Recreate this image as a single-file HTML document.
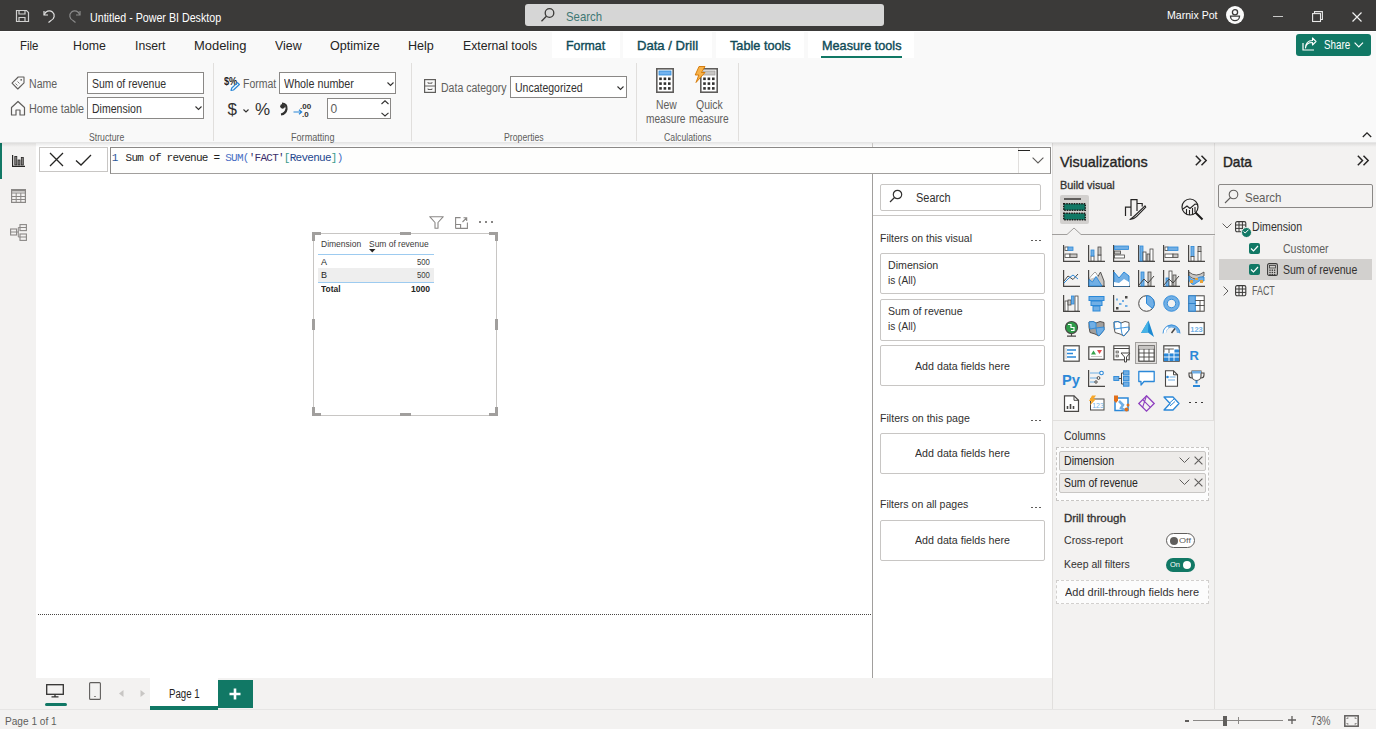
<!DOCTYPE html><html><head><meta charset="utf-8"><style>
*{margin:0;padding:0;box-sizing:border-box}
html,body{width:1376px;height:729px;overflow:hidden;background:#fff;font-family:"Liberation Sans",sans-serif}
.a{position:absolute}
.t{position:absolute;white-space:nowrap}
svg{overflow:visible}
</style></head><body>
<div class="a" style="left:0px;top:0px;width:1376px;height:31px;background:#3b3a39"></div>
<div class="a" style="left:0px;top:31px;width:1376px;height:112px;background:#f9f9f9"></div>
<div class="a" style="left:0px;top:31px;width:1376px;height:1px;background:#ffffff"></div>
<div class="a" style="left:0px;top:142px;width:1376px;height:1px;background:#e6e6e6"></div>
<div class="a" style="left:0px;top:143px;width:36px;height:567px;background:#f3f2f1"></div>
<div class="a" style="left:0px;top:143px;width:2px;height:36px;background:#117865"></div>
<div class="a" style="left:36px;top:143px;width:1016px;height:535px;background:#ffffff"></div>
<div class="a" style="left:36px;top:678px;width:1016px;height:32px;background:#f3f2f1"></div>
<div class="a" style="left:1052px;top:143px;width:324px;height:567px;background:#f3f2f1"></div>
<div class="a" style="left:1052px;top:143px;width:1px;height:567px;background:#e1dfdd"></div>
<div class="a" style="left:1214px;top:143px;width:1px;height:567px;background:#e1dfdd"></div>
<div class="a" style="left:0px;top:710px;width:1376px;height:19px;background:#f3f2f1"></div>
<div class="a" style="left:0px;top:709px;width:1376px;height:1px;background:#e6e5e4"></div>
<svg class="a" style="left:15px;top:9px" width="15" height="14" viewBox="0 0 15 14"><path d="M1.5 1.5h10l2 2v9h-12z" fill="none" stroke="#d0d0d0" stroke-width="1.2"/><path d="M4 1.5v3.5h6v-3.5M4 12.5v-4h6v4" fill="none" stroke="#d0d0d0" stroke-width="1.2"/></svg>
<svg class="a" style="left:42px;top:9px" width="14" height="14" viewBox="0 0 14 14"><path d="M2 2v4h4" fill="none" stroke="#e0e0e0" stroke-width="1.2"/><path d="M2.3 5.8A5 5 0 1 1 9 11.5L6.5 13.5" fill="none" stroke="#e0e0e0" stroke-width="1.2"/></svg>
<svg class="a" style="left:68px;top:9px" width="14" height="14" viewBox="0 0 14 14"><path d="M12 2v4h-4" fill="none" stroke="#8a8a8a" stroke-width="1.2"/><path d="M11.7 5.8A5 5 0 1 0 5 11.5L7.5 13.5" fill="none" stroke="#8a8a8a" stroke-width="1.2"/></svg>
<div class="t" style="left:90.40px;top:12.24px;font-size:12px;line-height:12px;color:#ffffff;font-family:'Liberation Sans',sans-serif;transform:scaleX(0.8893);transform-origin:0 0;">Untitled - Power BI Desktop</div>
<div class="a" style="left:525px;top:4px;width:359px;height:22px;background:#d6d6d6;border-radius:3px"></div>
<svg class="a" style="left:540px;top:7px" width="16" height="16" viewBox="0 0 16 16"><circle cx="9.5" cy="6" r="4.3" fill="none" stroke="#3b3a39" stroke-width="1.3"/><path d="M6.4 9.2L1.5 14.2" stroke="#3b3a39" stroke-width="1.3"/></svg>
<div class="t" style="left:566.00px;top:9.59px;font-size:13px;line-height:13px;color:#3e7874;font-family:'Liberation Sans',sans-serif;transform:scaleX(0.8736);transform-origin:0 0;">Search</div>
<div class="t" style="left:1166.80px;top:10.26px;font-size:11.5px;line-height:11.5px;color:#ffffff;font-family:'Liberation Sans',sans-serif;transform:scaleX(0.9187);transform-origin:0 0;">Marnix Pot</div>
<svg class="a" style="left:1226px;top:6px" width="18" height="18" viewBox="0 0 18 18"><circle cx="9" cy="9" r="9" fill="#fafafa"/><circle cx="9" cy="6.2" r="2.6" fill="none" stroke="#3b3a39" stroke-width="1.3"/><path d="M4.5 10.2h9a4.5 4.5 0 0 1-9 0z" fill="none" stroke="#3b3a39" stroke-width="1.3"/></svg>
<div class="a" style="left:1273px;top:16px;width:10px;height:1px;background:#c8c8c8"></div>
<svg class="a" style="left:1312px;top:11px" width="11" height="11" viewBox="0 0 11 11"><path d="M2.5 2.5V0.6h7.9v7.9H8.5" fill="none" stroke="#e8e8e8" stroke-width="1.1"/><rect x="0.6" y="2.6" width="7.9" height="7.9" fill="none" stroke="#e8e8e8" stroke-width="1.1"/></svg>
<svg class="a" style="left:1352px;top:12px" width="10" height="10" viewBox="0 0 10 10"><path d="M0.5 0.5L9.5 9.5M9.5 0.5L0.5 9.5" stroke="#f0f0f0" stroke-width="1.2"/></svg>
<div class="t" style="left:20.30px;top:39.29px;font-size:13px;line-height:13px;color:#252423;font-family:'Liberation Sans',sans-serif;transform:scaleX(0.8791);transform-origin:0 0;">File</div>
<div class="t" style="left:73.30px;top:39.29px;font-size:13px;line-height:13px;color:#252423;font-family:'Liberation Sans',sans-serif;transform:scaleX(0.9479);transform-origin:0 0;">Home</div>
<div class="t" style="left:134.90px;top:39.29px;font-size:13px;line-height:13px;color:#252423;font-family:'Liberation Sans',sans-serif;transform:scaleX(0.9385);transform-origin:0 0;">Insert</div>
<div class="t" style="left:194.30px;top:39.29px;font-size:13px;line-height:13px;color:#252423;font-family:'Liberation Sans',sans-serif;transform:scaleX(0.9947);transform-origin:0 0;">Modeling</div>
<div class="t" style="left:275.30px;top:39.29px;font-size:13px;line-height:13px;color:#252423;font-family:'Liberation Sans',sans-serif;transform:scaleX(0.9517);transform-origin:0 0;">View</div>
<div class="t" style="left:330.20px;top:39.29px;font-size:13px;line-height:13px;color:#252423;font-family:'Liberation Sans',sans-serif;transform:scaleX(0.9691);transform-origin:0 0;">Optimize</div>
<div class="t" style="left:408.20px;top:39.29px;font-size:13px;line-height:13px;color:#252423;font-family:'Liberation Sans',sans-serif;transform:scaleX(0.9657);transform-origin:0 0;">Help</div>
<div class="t" style="left:463.20px;top:39.29px;font-size:13px;line-height:13px;color:#252423;font-family:'Liberation Sans',sans-serif;transform:scaleX(0.9406);transform-origin:0 0;">External tools</div>
<div class="a" style="left:552px;top:32px;width:68px;height:26px;background:#ffffff"></div>
<div class="a" style="left:623px;top:32px;width:89px;height:26px;background:#ffffff"></div>
<div class="a" style="left:716px;top:32px;width:88px;height:26px;background:#ffffff"></div>
<div class="a" style="left:808px;top:32px;width:106px;height:26px;background:#ffffff"></div>
<div class="t" style="left:566.40px;top:38.89px;font-size:13px;line-height:13px;color:#0f4b57;font-family:'Liberation Sans',sans-serif;transform:scaleX(0.9503);transform-origin:0 0;-webkit-text-stroke:0.4px #0f4b57">Format</div>
<div class="t" style="left:637.40px;top:38.89px;font-size:13px;line-height:13px;color:#0f4b57;font-family:'Liberation Sans',sans-serif;transform:scaleX(1.0064);transform-origin:0 0;-webkit-text-stroke:0.4px #0f4b57">Data / Drill</div>
<div class="t" style="left:729.60px;top:38.89px;font-size:13px;line-height:13px;color:#0f4b57;font-family:'Liberation Sans',sans-serif;transform:scaleX(0.9768);transform-origin:0 0;-webkit-text-stroke:0.4px #0f4b57">Table tools</div>
<div class="t" style="left:821.50px;top:38.89px;font-size:13px;line-height:13px;color:#0f4b57;font-family:'Liberation Sans',sans-serif;transform:scaleX(0.9738);transform-origin:0 0;-webkit-text-stroke:0.4px #0f4b57">Measure tools</div>
<div class="a" style="left:821px;top:56px;width:81px;height:2px;background:#117865"></div>
<div class="a" style="left:1296px;top:34px;width:75px;height:22px;background:#117865;border-radius:3px"></div>
<svg class="a" style="left:1302px;top:38px" width="15" height="13" viewBox="0 0 15 13"><path d="M1 5v7h11" fill="none" stroke="#fff" stroke-width="1.2"/><path d="M3.5 10c0.5-4 3-5.5 7-5.5V7l3.5-3.5L10.5 0v2.5C6 2.5 3.5 5.5 3.5 10z" fill="none" stroke="#fff" stroke-width="1.1" stroke-linejoin="round"/></svg>
<div class="t" style="left:1323.80px;top:39.34px;font-size:12px;line-height:12px;color:#ffffff;font-family:'Liberation Sans',sans-serif;transform:scaleX(0.8177);transform-origin:0 0;">Share</div>
<svg class="a" style="left:1354px;top:42px" width="10" height="6" viewBox="0 0 10 6"><path d="M0.6 0.6L4.8 4.8L9 0.6" fill="none" stroke="#fff" stroke-width="1.2"/></svg>
<div class="a" style="left:0px;top:143px;width:1376px;height:4px;background:linear-gradient(rgba(0,0,0,0.09),rgba(0,0,0,0))"></div>
<div class="a" style="left:213px;top:63px;width:1px;height:78px;background:#e1dfdd"></div>
<div class="a" style="left:411px;top:63px;width:1px;height:78px;background:#e1dfdd"></div>
<div class="a" style="left:636px;top:63px;width:1px;height:78px;background:#e1dfdd"></div>
<div class="a" style="left:738px;top:63px;width:1px;height:78px;background:#e1dfdd"></div>
<svg class="a" style="left:11px;top:76px" width="14" height="14" viewBox="0 0 14 14"><path d="M1 7.2L7.2 1h5.8v5.8L6.8 13z" fill="none" stroke="#605e5c" stroke-width="1.1" stroke-linejoin="round"/><circle cx="10.2" cy="3.8" r="0.9" fill="#605e5c"/><path d="M4.5 7.5l2 2M6.5 5.5l2 2" stroke="#605e5c" stroke-width="0.8"/></svg>
<div class="t" style="left:28.80px;top:78.44px;font-size:12px;line-height:12px;color:#605e5c;font-family:'Liberation Sans',sans-serif;transform:scaleX(0.8801);transform-origin:0 0;">Name</div>
<div class="a" style="left:87px;top:72px;width:117px;height:22px;background:#fff;border:1px solid #8a8886"></div>
<div class="t" style="left:92.20px;top:78.44px;font-size:12px;line-height:12px;color:#323130;font-family:'Liberation Sans',sans-serif;transform:scaleX(0.8746);transform-origin:0 0;">Sum of revenue</div>
<svg class="a" style="left:10px;top:100px" width="16" height="16" viewBox="0 0 16 16"><path d="M1.5 7.5L8 1.5l6.5 6V15h-4.5v-5h-4v5H1.5z" fill="none" stroke="#605e5c" stroke-width="1.2" stroke-linejoin="round"/></svg>
<div class="t" style="left:28.80px;top:103.24px;font-size:12px;line-height:12px;color:#605e5c;font-family:'Liberation Sans',sans-serif;transform:scaleX(0.8977);transform-origin:0 0;">Home table</div>
<div class="a" style="left:87px;top:97px;width:117px;height:22px;background:#fff;border:1px solid #8a8886"></div>
<div class="t" style="left:92.20px;top:103.24px;font-size:12px;line-height:12px;color:#323130;font-family:'Liberation Sans',sans-serif;transform:scaleX(0.8783);transform-origin:0 0;">Dimension</div>
<svg class="a" style="left:195px;top:106px" width="7" height="4" viewBox="0 0 7 4"><path d="M0.5 0.5L3.5 3.5L6.5 0.5" fill="none" stroke="#323130" stroke-width="1.1"/></svg>
<div class="t" style="left:89.00px;top:132.83px;font-size:10px;line-height:10px;color:#605e5c;font-family:'Liberation Sans',sans-serif;transform:scaleX(0.8681);transform-origin:0 0;">Structure</div>
<div class="t" style="left:223.70px;top:76.63px;font-size:10px;line-height:10px;color:#252423;font-family:'Liberation Sans',sans-serif;font-weight:700;transform:scaleX(0.9204);transform-origin:0 0;">$%</div>
<svg class="a" style="left:229.5px;top:81.5px" width="10" height="9" viewBox="0 0 10 9"><path d="M1 8.5l0.8-2.5L7.5 0.6l1.9 1.9L3.5 8z" fill="none" stroke="#2b88d8" stroke-width="1.2" stroke-linejoin="round"/></svg>
<div class="t" style="left:242.80px;top:77.64px;font-size:12px;line-height:12px;color:#605e5c;font-family:'Liberation Sans',sans-serif;transform:scaleX(0.8741);transform-origin:0 0;">Format</div>
<div class="a" style="left:279px;top:72px;width:117px;height:22px;background:#fff;border:1px solid #8a8886"></div>
<div class="t" style="left:284.30px;top:77.64px;font-size:12px;line-height:12px;color:#323130;font-family:'Liberation Sans',sans-serif;transform:scaleX(0.8955);transform-origin:0 0;">Whole number</div>
<svg class="a" style="left:387px;top:82px" width="7" height="4" viewBox="0 0 7 4"><path d="M0.5 0.5L3.5 3.5L6.5 0.5" fill="none" stroke="#323130" stroke-width="1.1"/></svg>
<div class="t" style="left:227.50px;top:100.91px;font-size:17px;line-height:17px;color:#323130;font-family:'Liberation Sans',sans-serif;">$</div>
<svg class="a" style="left:243px;top:109px" width="6" height="4" viewBox="0 0 6 4"><path d="M0.5 0.5L3 3L5.5 0.5" fill="none" stroke="#323130" stroke-width="1.1"/></svg>
<div class="t" style="left:255.00px;top:100.91px;font-size:17px;line-height:17px;color:#323130;font-family:'Liberation Sans',sans-serif;">%</div>
<svg class="a" style="left:279px;top:102px" width="9" height="13" viewBox="0 0 9 13"><path d="M3 1.5c3 0 5 2 4.5 5.5C7 10 5 12 2 12.5" fill="none" stroke="#323130" stroke-width="2.2"/><circle cx="3.6" cy="4.3" r="2.4" fill="#323130"/></svg>
<div class="t" style="left:300.00px;top:102.83px;font-size:8px;line-height:8px;color:#323130;font-family:'Liberation Sans',sans-serif;font-weight:700;">.00</div>
<div class="t" style="left:302.00px;top:110.83px;font-size:8px;line-height:8px;color:#323130;font-family:'Liberation Sans',sans-serif;font-weight:700;">.0</div>
<svg class="a" style="left:293px;top:109px" width="10" height="6" viewBox="0 0 10 6"><path d="M0.5 3h8M6 0.7L8.7 3L6 5.3" fill="none" stroke="#2b88d8" stroke-width="1.2"/></svg>
<div class="a" style="left:327px;top:98px;width:64px;height:21px;background:#fff;border:1px solid #8a8886"></div>
<div class="t" style="left:330.60px;top:102.84px;font-size:12px;line-height:12px;color:#605e5c;font-family:'Liberation Sans',sans-serif;">0</div>
<svg class="a" style="left:381px;top:100px" width="8" height="5" viewBox="0 0 8 5"><path d="M0.5 4L4 0.8L7.5 4" fill="none" stroke="#323130" stroke-width="1.1"/></svg>
<svg class="a" style="left:381px;top:112px" width="8" height="5" viewBox="0 0 8 5"><path d="M0.5 0.8L4 4L7.5 0.8" fill="none" stroke="#323130" stroke-width="1.1"/></svg>
<div class="t" style="left:290.90px;top:132.73px;font-size:10px;line-height:10px;color:#605e5c;font-family:'Liberation Sans',sans-serif;transform:scaleX(0.9100);transform-origin:0 0;">Formatting</div>
<svg class="a" style="left:424px;top:79px" width="12" height="14" viewBox="0 0 12 14"><rect x="0.6" y="0.6" width="10.8" height="12.8" fill="none" stroke="#605e5c" stroke-width="1.2"/><path d="M0.6 7h10.8M4 3.2v1h4v-1M4 9.5v1h4v-1" fill="none" stroke="#605e5c" stroke-width="1"/></svg>
<div class="t" style="left:441.00px;top:81.64px;font-size:12px;line-height:12px;color:#605e5c;font-family:'Liberation Sans',sans-serif;transform:scaleX(0.8782);transform-origin:0 0;">Data category</div>
<div class="a" style="left:510px;top:76px;width:117px;height:22px;background:#fff;border:1px solid #8a8886"></div>
<div class="t" style="left:515.30px;top:81.94px;font-size:12px;line-height:12px;color:#323130;font-family:'Liberation Sans',sans-serif;transform:scaleX(0.8747);transform-origin:0 0;">Uncategorized</div>
<svg class="a" style="left:617px;top:86px" width="7" height="4" viewBox="0 0 7 4"><path d="M0.5 0.5L3.5 3.5L6.5 0.5" fill="none" stroke="#323130" stroke-width="1.1"/></svg>
<div class="t" style="left:504.00px;top:132.63px;font-size:10px;line-height:10px;color:#605e5c;font-family:'Liberation Sans',sans-serif;transform:scaleX(0.8706);transform-origin:0 0;">Properties</div>
<svg class="a" style="left:656px;top:68px" width="18" height="25" viewBox="0 0 18 25"><rect x="0.8" y="0.8" width="16.4" height="23.4" fill="#fff" stroke="#605e5c" stroke-width="1.6"/><rect x="3" y="3" width="12" height="4" fill="#74b3ef" stroke="#2b88d8" stroke-width="0.8"/><rect x="3.2" y="9.5" width="2.6" height="2.6" fill="#323130"/><rect x="3.2" y="14.3" width="2.6" height="2.6" fill="#323130"/><rect x="3.2" y="19.1" width="2.6" height="2.6" fill="#323130"/><rect x="7.6" y="9.5" width="2.6" height="2.6" fill="#323130"/><rect x="7.6" y="14.3" width="2.6" height="2.6" fill="#323130"/><rect x="7.6" y="19.1" width="2.6" height="2.6" fill="#323130"/><rect x="12.0" y="9.5" width="2.6" height="2.6" fill="#323130"/><rect x="12.0" y="14.3" width="2.6" height="2.6" fill="#323130"/><rect x="12.0" y="19.1" width="2.6" height="2.6" fill="#323130"/></svg>
<svg class="a" style="left:700px;top:68px" width="18" height="25" viewBox="0 0 18 25"><rect x="0.8" y="0.8" width="16.4" height="23.4" fill="#fff" stroke="#605e5c" stroke-width="1.6"/><rect x="3" y="3" width="12" height="4" fill="#c8c6c4" stroke="#a19f9d" stroke-width="0.8"/><rect x="3.2" y="9.5" width="2.6" height="2.6" fill="#323130"/><rect x="3.2" y="14.3" width="2.6" height="2.6" fill="#323130"/><rect x="3.2" y="19.1" width="2.6" height="2.6" fill="#323130"/><rect x="7.6" y="9.5" width="2.6" height="2.6" fill="#323130"/><rect x="7.6" y="14.3" width="2.6" height="2.6" fill="#323130"/><rect x="7.6" y="19.1" width="2.6" height="2.6" fill="#323130"/><rect x="12.0" y="9.5" width="2.6" height="2.6" fill="#323130"/><rect x="12.0" y="14.3" width="2.6" height="2.6" fill="#323130"/><rect x="12.0" y="19.1" width="2.6" height="2.6" fill="#323130"/></svg>
<svg class="a" style="left:694px;top:66px" width="12" height="17" viewBox="0 0 12 17"><path d="M5 0.5h6L7.5 6.5H11L2 16.5L4.8 9H1.2z" fill="#f7b24a" stroke="#d47500" stroke-width="0.9" stroke-linejoin="round"/></svg>
<div class="t" style="left:655.60px;top:99.14px;font-size:12px;line-height:12px;color:#605e5c;font-family:'Liberation Sans',sans-serif;transform:scaleX(0.8645);transform-origin:0 0;">New</div>
<div class="t" style="left:645.70px;top:113.34px;font-size:12px;line-height:12px;color:#605e5c;font-family:'Liberation Sans',sans-serif;transform:scaleX(0.8462);transform-origin:0 0;">measure</div>
<div class="t" style="left:696.00px;top:99.14px;font-size:12px;line-height:12px;color:#605e5c;font-family:'Liberation Sans',sans-serif;transform:scaleX(0.8724);transform-origin:0 0;">Quick</div>
<div class="t" style="left:689.40px;top:113.34px;font-size:12px;line-height:12px;color:#605e5c;font-family:'Liberation Sans',sans-serif;transform:scaleX(0.8483);transform-origin:0 0;">measure</div>
<div class="t" style="left:663.60px;top:132.63px;font-size:10px;line-height:10px;color:#605e5c;font-family:'Liberation Sans',sans-serif;transform:scaleX(0.8705);transform-origin:0 0;">Calculations</div>
<svg class="a" style="left:1362px;top:132px" width="10" height="6" viewBox="0 0 10 6"><path d="M0.8 5L5 0.9L9.2 5" fill="none" stroke="#252423" stroke-width="1.3"/></svg>
<svg class="a" style="left:12px;top:155px" width="13" height="12" viewBox="0 0 13 12"><path d="M0.6 0v11.4H13" fill="none" stroke="#252423" stroke-width="1.2"/><rect x="2.8" y="1.5" width="2" height="8.5" fill="#8a8886" stroke="#252423" stroke-width="0.8"/><rect x="6" y="5" width="2" height="5" fill="#8a8886" stroke="#252423" stroke-width="0.8"/><rect x="9.3" y="2.5" width="2" height="7.5" fill="#8a8886" stroke="#252423" stroke-width="0.8"/></svg>
<svg class="a" style="left:11px;top:189px" width="15" height="14" viewBox="0 0 15 14"><rect x="0.6" y="0.6" width="13.8" height="12.8" fill="none" stroke="#8a8886" stroke-width="1.2"/><path d="M0.6 4h13.8M0.6 7.5h13.8M0.6 10.5h13.8M5.2 4v9.4M9.8 4v9.4" stroke="#8a8886" stroke-width="1"/><path d="M0.6 1.5h13.8" stroke="#8a8886" stroke-width="1.8"/></svg>
<svg class="a" style="left:10px;top:224px" width="17" height="17" viewBox="0 0 17 17"><rect x="0.6" y="5" width="6" height="6" fill="none" stroke="#8a8886" stroke-width="1.1"/><rect x="10" y="0.6" width="6.4" height="6" fill="none" stroke="#8a8886" stroke-width="1.1"/><rect x="10" y="10" width="6.4" height="6.4" fill="none" stroke="#8a8886" stroke-width="1.1"/><path d="M0.6 8h6M10 3.5h6.4M10 13h6.4M6.6 8H8.3V3.5H10M8.3 8V13H10" fill="none" stroke="#8a8886" stroke-width="1"/></svg>
<div class="a" style="left:39px;top:147px;width:69px;height:25px;background:#fff;border:1px solid #c8c6c4"></div>
<svg class="a" style="left:49px;top:152px" width="15" height="15" viewBox="0 0 15 15"><path d="M1 1L14 14M14 1L1 14" stroke="#252423" stroke-width="1.3"/></svg>
<svg class="a" style="left:75px;top:154px" width="17" height="12" viewBox="0 0 17 12"><path d="M1 6.5L6 11L16 1" fill="none" stroke="#252423" stroke-width="1.3"/></svg>
<div class="a" style="left:110px;top:147px;width:941px;height:27px;background:#fefefd;border:1px solid #8a8886;border-bottom-color:#a19f9d"></div>
<div class="a" style="left:1018px;top:148px;width:1px;height:25px;background:#e1dfdd"></div>
<div class="a" style="left:1018px;top:150px;width:12px;height:1px;background:#252423"></div>
<svg class="a" style="left:1032px;top:157px" width="12" height="7" viewBox="0 0 12 7"><path d="M0.6 0.6L6 6L11.4 0.6" fill="none" stroke="#605e5c" stroke-width="1.1"/></svg>
<div class="t" style="left:111.8px;top:152.5px;font-size:11px;line-height:11px;font-family:'Liberation Mono',monospace;color:#2b5797">1</div>
<div class="t" style="left:125.6px;top:152.5px;font-size:11px;line-height:11px;font-family:'Liberation Mono',monospace;letter-spacing:-0.74px;color:#1e1e1e;white-space:pre">Sum of revenue = <span style="color:#4a6fc4">SUM(</span><span style="color:#3a2f6b">'FACT'</span><span style="color:#3a9a8a">[</span><span style="color:#24478f">Revenue</span><span style="color:#3a9a8a">]</span><span style="color:#4a6fc4">)</span></div>
<div class="a" style="left:313px;top:233px;width:184px;height:183px;border:1px solid #c8c6c4"></div>
<div class="a" style="left:312px;top:232px;width:9px;height:3px;background:#a19f9d"></div>
<div class="a" style="left:312px;top:232px;width:3px;height:9px;background:#a19f9d"></div>
<div class="a" style="left:489px;top:232px;width:9px;height:3px;background:#a19f9d"></div>
<div class="a" style="left:495px;top:232px;width:3px;height:9px;background:#a19f9d"></div>
<div class="a" style="left:312px;top:413px;width:9px;height:3px;background:#a19f9d"></div>
<div class="a" style="left:312px;top:407px;width:3px;height:9px;background:#a19f9d"></div>
<div class="a" style="left:489px;top:413px;width:9px;height:3px;background:#a19f9d"></div>
<div class="a" style="left:495px;top:407px;width:3px;height:9px;background:#a19f9d"></div>
<div class="a" style="left:400px;top:232px;width:11px;height:3px;background:#a19f9d"></div>
<div class="a" style="left:400px;top:413px;width:11px;height:3px;background:#a19f9d"></div>
<div class="a" style="left:312px;top:319px;width:3px;height:11px;background:#a19f9d"></div>
<div class="a" style="left:495px;top:319px;width:3px;height:11px;background:#a19f9d"></div>
<svg class="a" style="left:429px;top:216px" width="15" height="13" viewBox="0 0 15 13"><path d="M0.7 0.7h13.6L9 6.5v5.8H6V6.5z" fill="none" stroke="#8a8886" stroke-width="1.1" stroke-linejoin="round"/></svg>
<svg class="a" style="left:455px;top:217px" width="13" height="12" viewBox="0 0 13 12"><path d="M0.6 11.4V0.6h5M12.4 5.5v5.9H0.6M0.6 7.5h5v4M7.5 5L11.5 1M8.5 0.8h3.2v3.2" fill="none" stroke="#8a8886" stroke-width="1.1"/></svg>
<div class="a" style="left:479px;top:221px;width:2px;height:2px;background:#605e5c;border-radius:1px"></div>
<div class="a" style="left:485px;top:221px;width:2px;height:2px;background:#605e5c;border-radius:1px"></div>
<div class="a" style="left:491px;top:221px;width:2px;height:2px;background:#605e5c;border-radius:1px"></div>
<div class="t" style="left:321.00px;top:239.78px;font-size:9px;line-height:9px;color:#3b3a39;font-family:'Liberation Sans',sans-serif;transform:scaleX(0.9453);transform-origin:0 0;">Dimension</div>
<div class="t" style="left:369.20px;top:239.78px;font-size:9px;line-height:9px;color:#3b3a39;font-family:'Liberation Sans',sans-serif;transform:scaleX(0.9380);transform-origin:0 0;">Sum of revenue</div>
<svg class="a" style="left:369px;top:249px" width="7" height="4" viewBox="0 0 7 4"><path d="M0 0h6.5L3.25 3.5z" fill="#252423"/></svg>
<div class="a" style="left:318px;top:254px;width:116px;height:1px;background:#9dcbf0"></div>
<div class="t" style="left:321.00px;top:257.98px;font-size:9px;line-height:9px;color:#252423;font-family:'Liberation Sans',sans-serif;">A</div>
<div class="t" style="left:416.80px;top:257.98px;font-size:9px;line-height:9px;color:#3b3a39;font-family:'Liberation Sans',sans-serif;transform:scaleX(0.8583);transform-origin:0 0;">500</div>
<div class="a" style="left:318px;top:268px;width:116px;height:14px;background:#eeeeee"></div>
<div class="t" style="left:321.00px;top:271.48px;font-size:9px;line-height:9px;color:#252423;font-family:'Liberation Sans',sans-serif;">B</div>
<div class="t" style="left:416.80px;top:271.48px;font-size:9px;line-height:9px;color:#3b3a39;font-family:'Liberation Sans',sans-serif;transform:scaleX(0.8583);transform-origin:0 0;">500</div>
<div class="a" style="left:318px;top:282px;width:116px;height:1px;background:#9dcbf0"></div>
<div class="t" style="left:321.00px;top:285.48px;font-size:9px;line-height:9px;color:#252423;font-family:'Liberation Sans',sans-serif;font-weight:700;transform:scaleX(0.9359);transform-origin:0 0;">Total</div>
<div class="t" style="left:410.60px;top:285.48px;font-size:9px;line-height:9px;color:#252423;font-family:'Liberation Sans',sans-serif;font-weight:700;transform:scaleX(0.9538);transform-origin:0 0;">1000</div>
<div class="a" style="left:38px;top:614px;width:833px;height:1px;background:repeating-linear-gradient(90deg,#484644 0 1px,transparent 1px 2px)"></div>
<div class="a" style="left:872px;top:143px;width:1px;height:4px;background:#c8c6c4"></div>
<div class="a" style="left:872px;top:173px;width:1px;height:505px;background:#a19f9d"></div>
<div class="a" style="left:880px;top:184px;width:161px;height:27px;background:#fff;border:1px solid #c8c6c4;border-radius:2px"></div>
<svg class="a" style="left:889px;top:189px" width="14" height="14" viewBox="0 0 14 14"><circle cx="8.5" cy="5.5" r="4.2" fill="none" stroke="#323130" stroke-width="1.2"/><path d="M5.5 8.5L1 13" stroke="#323130" stroke-width="1.2"/></svg>
<div class="t" style="left:915.80px;top:192.24px;font-size:12px;line-height:12px;color:#323130;font-family:'Liberation Sans',sans-serif;transform:scaleX(0.9122);transform-origin:0 0;">Search</div>
<div class="a" style="left:873px;top:215px;width:179px;height:1px;background:#c8c6c4"></div>
<div class="t" style="left:880.40px;top:232.56px;font-size:11.5px;line-height:11.5px;color:#323130;font-family:'Liberation Sans',sans-serif;transform:scaleX(0.9112);transform-origin:0 0;">Filters on this visual</div>
<div class="a" style="left:1031.4px;top:240px;width:1.199999999999818px;height:1.1999999999999886px;background:#605e5c"></div>
<div class="a" style="left:1035.4px;top:240px;width:1.199999999999818px;height:1.1999999999999886px;background:#605e5c"></div>
<div class="a" style="left:1039.4px;top:240px;width:1.199999999999818px;height:1.1999999999999886px;background:#605e5c"></div>
<div class="a" style="left:880px;top:253px;width:165px;height:41px;background:#fff;border:1px solid #c8c6c4;border-radius:2px"></div>
<div class="t" style="left:888.00px;top:259.76px;font-size:11.5px;line-height:11.5px;color:#323130;font-family:'Liberation Sans',sans-serif;transform:scaleX(0.9257);transform-origin:0 0;">Dimension</div>
<div class="t" style="left:888.00px;top:275.46px;font-size:11.5px;line-height:11.5px;color:#323130;font-family:'Liberation Sans',sans-serif;transform:scaleX(0.8789);transform-origin:0 0;">is (All)</div>
<div class="a" style="left:880px;top:299px;width:165px;height:42px;background:#fff;border:1px solid #c8c6c4;border-radius:2px"></div>
<div class="t" style="left:888.00px;top:305.86px;font-size:11.5px;line-height:11.5px;color:#323130;font-family:'Liberation Sans',sans-serif;transform:scaleX(0.9176);transform-origin:0 0;">Sum of revenue</div>
<div class="t" style="left:888.00px;top:321.16px;font-size:11.5px;line-height:11.5px;color:#323130;font-family:'Liberation Sans',sans-serif;transform:scaleX(0.8789);transform-origin:0 0;">is (All)</div>
<div class="a" style="left:880px;top:345px;width:165px;height:41px;background:#fff;border:1px solid #c8c6c4;border-radius:2px"></div>
<div class="t" style="left:915.20px;top:361.36px;font-size:11.5px;line-height:11.5px;color:#323130;font-family:'Liberation Sans',sans-serif;transform:scaleX(0.9277);transform-origin:0 0;">Add data fields here</div>
<div class="t" style="left:879.80px;top:412.86px;font-size:11.5px;line-height:11.5px;color:#323130;font-family:'Liberation Sans',sans-serif;transform:scaleX(0.9241);transform-origin:0 0;">Filters on this page</div>
<div class="a" style="left:1031.4px;top:420px;width:1.199999999999818px;height:1.1999999999999886px;background:#605e5c"></div>
<div class="a" style="left:1035.4px;top:420px;width:1.199999999999818px;height:1.1999999999999886px;background:#605e5c"></div>
<div class="a" style="left:1039.4px;top:420px;width:1.199999999999818px;height:1.1999999999999886px;background:#605e5c"></div>
<div class="a" style="left:880px;top:433px;width:165px;height:41px;background:#fff;border:1px solid #c8c6c4;border-radius:2px"></div>
<div class="t" style="left:915.20px;top:447.86px;font-size:11.5px;line-height:11.5px;color:#323130;font-family:'Liberation Sans',sans-serif;transform:scaleX(0.9277);transform-origin:0 0;">Add data fields here</div>
<div class="t" style="left:879.80px;top:499.36px;font-size:11.5px;line-height:11.5px;color:#323130;font-family:'Liberation Sans',sans-serif;transform:scaleX(0.9146);transform-origin:0 0;">Filters on all pages</div>
<div class="a" style="left:1031.4px;top:507px;width:1.199999999999818px;height:1.1999999999999886px;background:#605e5c"></div>
<div class="a" style="left:1035.4px;top:507px;width:1.199999999999818px;height:1.1999999999999886px;background:#605e5c"></div>
<div class="a" style="left:1039.4px;top:507px;width:1.199999999999818px;height:1.1999999999999886px;background:#605e5c"></div>
<div class="a" style="left:880px;top:520px;width:165px;height:41px;background:#fff;border:1px solid #c8c6c4;border-radius:2px"></div>
<div class="t" style="left:915.20px;top:535.26px;font-size:11.5px;line-height:11.5px;color:#323130;font-family:'Liberation Sans',sans-serif;transform:scaleX(0.9277);transform-origin:0 0;">Add data fields here</div>
<div class="t" style="left:1060.40px;top:154.20px;font-size:15px;line-height:15px;color:#252423;font-family:'Liberation Sans',sans-serif;transform:scaleX(0.9604);transform-origin:0 0;-webkit-text-stroke:0.35px #252423">Visualizations</div>
<svg class="a" style="left:1195px;top:155px" width="13" height="11" viewBox="0 0 13 11"><path d="M0.8 0.8L5.5 5.5L0.8 10.2M6.5 0.8L11.2 5.5L6.5 10.2" fill="none" stroke="#252423" stroke-width="1.45"/></svg>
<svg class="a" style="left:1357px;top:155px" width="13" height="11" viewBox="0 0 13 11"><path d="M0.8 0.8L5.5 5.5L0.8 10.2M6.5 0.8L11.2 5.5L6.5 10.2" fill="none" stroke="#252423" stroke-width="1.45"/></svg>
<div class="t" style="left:1060.40px;top:180.19px;font-size:11px;line-height:11px;color:#323130;font-family:'Liberation Sans',sans-serif;transform:scaleX(0.9845);transform-origin:0 0;-webkit-text-stroke:0.3px #323130">Build visual</div>
<div class="a" style="left:1060px;top:195px;width:29px;height:29px;background:#d2d0ce;border-radius:2px"></div>
<div class="a" style="left:1064px;top:198px;width:17px;height:2px;background:#605e5c"></div>
<svg class="a" style="left:1063px;top:203px" width="23" height="18" viewBox="0 0 23 18"><rect x="0.75" y="0.75" width="21.5" height="6.5" fill="#117865" stroke="#1b1a19" stroke-width="1.5" stroke-dasharray="1.5 1"/><rect x="0.75" y="10.25" width="21.5" height="6.5" fill="#117865" stroke="#1b1a19" stroke-width="1.5" stroke-dasharray="1.5 1"/></svg>
<svg class="a" style="left:1124px;top:199px" width="22" height="22" viewBox="0 0 22 22"><path d="M1.5 17V8.2H7M7 17V0.7H13V12M13 4.5H18.2V7.5" fill="none" stroke="#252423" stroke-width="1.2"/><path d="M21 6.8L11.5 16c-1.5 1.5-3 2.8-5.5 4.5c3.2-0.2 5-1.2 6.5-2.8L21.8 8.2z" fill="#fff" stroke="#252423" stroke-width="1.1" stroke-linejoin="round"/></svg>
<svg class="a" style="left:1181px;top:198px" width="23" height="23" viewBox="0 0 23 23"><circle cx="9" cy="9" r="8" fill="none" stroke="#252423" stroke-width="1.2"/><path d="M2 11L6 8l3 2.5l5-4.5l3 0.5" fill="none" stroke="#252423" stroke-width="1.1"/><path d="M5.5 11v5M8.5 12v5M11.5 10v6.5M14 9v5" stroke="#252423" stroke-width="1.1"/><path d="M14.5 14.5L21.5 21.5" stroke="#1b1a19" stroke-width="2"/></svg>
<svg class="a" style="left:1052px;top:227px" width="163" height="9" viewBox="0 0 163 9"><path d="M0 7.5H15L22 1L29 7.5H163" fill="none" stroke="#a19f9d" stroke-width="1"/></svg>
<div class="a" style="left:1213px;top:236px;width:1px;height:184px;background:#e1dfdd"></div>
<svg class="a" style="left:1063px;top:245px" width="17" height="17" viewBox="0 0 17 17"><path d="M0.6 0v16.4H17" fill="none" stroke="#484644" stroke-width="1.2"/><rect x="2" y="2" width="3" height="3.5" fill="#ffffff" stroke="#484644" stroke-width="0.8"/><rect x="5" y="2" width="5" height="3.5" fill="#71afe5" stroke="#2b88d8" stroke-width="0.8"/><rect x="2" y="9" width="5" height="3.5" fill="#ffffff" stroke="#484644" stroke-width="0.8"/><rect x="7" y="9" width="7" height="3.5" fill="#c8c6c4" stroke="#484644" stroke-width="0.8"/></svg>
<svg class="a" style="left:1088px;top:245px" width="17" height="17" viewBox="0 0 17 17"><path d="M0.6 0v16.4H17" fill="none" stroke="#484644" stroke-width="1.2"/><rect x="3" y="11" width="3" height="5" fill="#ffffff" stroke="#484644" stroke-width="0.8"/><rect x="3" y="5" width="3" height="6" fill="#71afe5" stroke="#2b88d8" stroke-width="0.8"/><rect x="10" y="10" width="3" height="6" fill="#ffffff" stroke="#484644" stroke-width="0.8"/><rect x="10" y="2" width="3" height="8" fill="#c8c6c4" stroke="#484644" stroke-width="0.8"/></svg>
<svg class="a" style="left:1113px;top:245px" width="17" height="17" viewBox="0 0 17 17"><path d="M0.6 0v16.4H17" fill="none" stroke="#484644" stroke-width="1.2"/><rect x="1.5" y="1" width="14" height="3.5" fill="#71afe5" stroke="#2b88d8" stroke-width="0.8"/><rect x="1.5" y="6" width="6" height="3" fill="#c8c6c4" stroke="#484644" stroke-width="0.8"/><rect x="1.5" y="10" width="10" height="3" fill="#ffffff" stroke="#484644" stroke-width="0.8"/></svg>
<svg class="a" style="left:1138px;top:245px" width="17" height="17" viewBox="0 0 17 17"><path d="M0.6 0v16.4H17" fill="none" stroke="#484644" stroke-width="1.2"/><rect x="2" y="1" width="3" height="15" fill="#71afe5" stroke="#2b88d8" stroke-width="0.8"/><rect x="5" y="7" width="3" height="9" fill="#ffffff" stroke="#484644" stroke-width="0.8"/><rect x="9" y="9" width="3" height="7" fill="#c8c6c4" stroke="#484644" stroke-width="0.8"/><rect x="12" y="4" width="3" height="12" fill="#ffffff" stroke="#484644" stroke-width="0.8"/></svg>
<svg class="a" style="left:1163px;top:245px" width="17" height="17" viewBox="0 0 17 17"><path d="M0.6 0v16.4H17" fill="none" stroke="#484644" stroke-width="1.2"/><rect x="2" y="2" width="3" height="3.5" fill="#ffffff" stroke="#484644" stroke-width="0.8"/><rect x="5" y="2" width="10" height="3.5" fill="#71afe5" stroke="#2b88d8" stroke-width="0.8"/><rect x="2" y="9" width="8" height="3.5" fill="#ffffff" stroke="#484644" stroke-width="0.8"/><rect x="10" y="9" width="5" height="3.5" fill="#c8c6c4" stroke="#484644" stroke-width="0.8"/></svg>
<svg class="a" style="left:1188px;top:245px" width="17" height="17" viewBox="0 0 17 17"><path d="M0.6 0v16.4H17" fill="none" stroke="#484644" stroke-width="1.2"/><rect x="3" y="1.5" width="3" height="10" fill="#71afe5" stroke="#2b88d8" stroke-width="0.8"/><rect x="3" y="11.5" width="3" height="4.5" fill="#ffffff" stroke="#484644" stroke-width="0.8"/><rect x="10" y="1.5" width="3" height="5" fill="#c8c6c4" stroke="#484644" stroke-width="0.8"/><rect x="10" y="6.5" width="3" height="9.5" fill="#ffffff" stroke="#484644" stroke-width="0.8"/></svg>
<svg class="a" style="left:1063px;top:270px" width="17" height="17" viewBox="0 0 17 17"><path d="M0.6 0v16.4H17" fill="none" stroke="#484644" stroke-width="1.2"/><path d="M1 11L5 6L10 9.5L15 4" fill="none" stroke="#484644" stroke-width="1"/><path d="M1 13L6 8L10 5L15 9" fill="none" stroke="#2b88d8" stroke-width="1"/></svg>
<svg class="a" style="left:1088px;top:270px" width="17" height="17" viewBox="0 0 17 17"><path d="M0.6 0v16.4H17" fill="none" stroke="#484644" stroke-width="1.2"/><path d="M1 16V9L7 2L10 6.5L12.5 2L16 11V16z" fill="#c8c6c4" stroke="#484644" stroke-width="0.9"/><path d="M1 9L7 2L10 6.5" fill="#ffffff"/><path d="M1 16V9.5L4.5 12L8 6.5L14 16z" fill="#71afe5" stroke="#2b88d8" stroke-width="0.9"/></svg>
<svg class="a" style="left:1113px;top:270px" width="17" height="17" viewBox="0 0 17 17"><path d="M0.6 0v16.4H17" fill="none" stroke="#484644" stroke-width="1.2"/><path d="M1 2L6 8L11 2L16 6V16H1z" fill="#71afe5" stroke="#2b88d8" stroke-width="1"/><path d="M1 12L6 13L11 9L16 12V16H1z" fill="#ffffff"/></svg>
<svg class="a" style="left:1138px;top:270px" width="17" height="17" viewBox="0 0 17 17"><path d="M0.6 0v16.4H17" fill="none" stroke="#484644" stroke-width="1.2"/><rect x="3" y="2" width="3" height="14" fill="#71afe5" stroke="#2b88d8" stroke-width="0.8"/><rect x="10" y="2" width="3" height="14" fill="#c8c6c4" stroke="#484644" stroke-width="0.8"/><path d="M1 15L6 9L10 13L16 6" fill="none" stroke="#484644" stroke-width="1"/></svg>
<svg class="a" style="left:1163px;top:270px" width="17" height="17" viewBox="0 0 17 17"><path d="M0.6 0v16.4H17" fill="none" stroke="#484644" stroke-width="1.2"/><rect x="3" y="8" width="3" height="8" fill="#71afe5" stroke="#2b88d8" stroke-width="0.8"/><rect x="6" y="1" width="3" height="15" fill="#ffffff" stroke="#484644" stroke-width="0.8"/><rect x="10" y="5" width="3" height="11" fill="#c8c6c4" stroke="#484644" stroke-width="0.8"/><path d="M1 15L6 9L10 13L16 6" fill="none" stroke="#484644" stroke-width="1"/></svg>
<svg class="a" style="left:1188px;top:270px" width="17" height="17" viewBox="0 0 17 17"><path d="M0.6 0v16.4H17" fill="none" stroke="#484644" stroke-width="1.2"/><path d="M1 2Q8 8 16 2V6Q8 12 1 6z" fill="#c8c6c4" stroke="#484644" stroke-width="0.8"/><path d="M1 6Q4 12 8 9T16 7V11Q12 9 8 13T1 10z" fill="#71afe5" stroke="#2b88d8" stroke-width="0.9"/><rect x="2" y="10" width="3" height="3" fill="#e8a33a"/><rect x="12" y="10" width="3" height="3" fill="#e8a33a"/><rect x="7" y="8" width="3" height="2" fill="#e8a33a"/></svg>
<svg class="a" style="left:1063px;top:295px" width="17" height="17" viewBox="0 0 17 17"><path d="M0.6 0v16.4H17" fill="none" stroke="#484644" stroke-width="1.2"/><rect x="2" y="6" width="3" height="10" fill="#ffffff" stroke="#484644" stroke-width="0.8"/><rect x="5" y="5" width="3" height="5" fill="#c8c6c4" stroke="#484644" stroke-width="0.8"/><rect x="8.5" y="1" width="2.5" height="8" fill="#71afe5" stroke="#2b88d8" stroke-width="0.8"/><rect x="12" y="1" width="3" height="15" fill="#ffffff" stroke="#484644" stroke-width="0.8"/></svg>
<svg class="a" style="left:1088px;top:295px" width="17" height="17" viewBox="0 0 17 17"><rect x="1" y="1.5" width="15" height="4" fill="#71afe5" stroke="#2b88d8" stroke-width="1"/><rect x="3" y="6" width="11" height="4.5" fill="#71afe5" stroke="#2b88d8" stroke-width="1"/><rect x="5" y="11" width="7" height="5" fill="#71afe5" stroke="#2b88d8" stroke-width="1"/></svg>
<svg class="a" style="left:1113px;top:295px" width="17" height="17" viewBox="0 0 17 17"><path d="M0.6 0v16.4H17" fill="none" stroke="#484644" stroke-width="1.2"/><rect x="3" y="3.5" width="2" height="2" fill="#71afe5"/><rect x="6" y="8" width="2.5" height="2" fill="#71afe5"/><rect x="9" y="5" width="2" height="2" fill="#71afe5"/><rect x="12" y="1" width="2.5" height="2.5" fill="#484644"/><rect x="3" y="12" width="2.5" height="2.5" fill="#484644"/><rect x="12" y="10" width="2.5" height="2" fill="#71afe5"/></svg>
<svg class="a" style="left:1138px;top:295px" width="17" height="17" viewBox="0 0 17 17"><circle cx="8.5" cy="8.5" r="7.8" fill="#f8f8f8" stroke="#484644" stroke-width="1"/><path d="M8.5 0.7A7.8 7.8 0 0 1 14.5 13.5L8.5 8.5z" fill="#71afe5" stroke="#2b88d8" stroke-width="1"/></svg>
<svg class="a" style="left:1163px;top:295px" width="17" height="17" viewBox="0 0 17 17"><circle cx="8.5" cy="8.5" r="6" fill="none" stroke="#71afe5" stroke-width="3.5"/><circle cx="8.5" cy="8.5" r="7.8" fill="none" stroke="#2b88d8" stroke-width="0.9"/><circle cx="8.5" cy="8.5" r="4.2" fill="none" stroke="#2b88d8" stroke-width="0.9"/></svg>
<svg class="a" style="left:1188px;top:295px" width="17" height="17" viewBox="0 0 17 17"><rect x="0.8" y="0.8" width="15.4" height="15.4" fill="#ffffff" stroke="#484644" stroke-width="1"/><rect x="0.8" y="0.8" width="6.5" height="15.4" fill="#71afe5" stroke="#2b88d8" stroke-width="1"/><path d="M0.8 8.5h6.5M7.3 5.5h9M7.3 10.5h9M12 5.5v10.7" stroke="#484644" stroke-width="0.9"/><path d="M0.8 8.5h6.5" stroke="#2b88d8" stroke-width="0.9"/></svg>
<svg class="a" style="left:1063px;top:320px" width="17" height="17" viewBox="0 0 17 17"><circle cx="8.5" cy="7.5" r="6" fill="#2e9d4a" stroke="#484644" stroke-width="1.2"/><path d="M5 4.5h3v3h3v3H8" fill="none" stroke="#fff" stroke-width="1.2"/><path d="M8.5 13.5v2M4 16.2h9" stroke="#484644" stroke-width="1.2"/></svg>
<svg class="a" style="left:1088px;top:320px" width="17" height="17" viewBox="0 0 17 17"><path d="M1 2L5 1.5L8 3L12 1.5L16 2.5V10L11 16L7 14L2 12.5L1 7z" fill="#a19f9d" stroke="#484644" stroke-width="0.9"/><path d="M1 2L5 1.5L8 3V8L2 9z" fill="#71afe5" stroke="#2b88d8" stroke-width="0.9"/><path d="M8 8L16 7V10L11 16L9 14z" fill="#71afe5" stroke="#2b88d8" stroke-width="0.9"/></svg>
<svg class="a" style="left:1113px;top:320px" width="17" height="17" viewBox="0 0 17 17"><path d="M1 2L5 1.5L8 3L12 1.5L16 2.5V10L11 16L7 14L2 12.5L1 7z" fill="#fff" stroke="#484644" stroke-width="0.9"/><path d="M1 2L5 1.5L8 3V8L2 9zM8 8L16 7V10L11 16L9 14z" fill="none" stroke="#2b88d8" stroke-width="0.9"/></svg>
<svg class="a" style="left:1138px;top:320px" width="17" height="17" viewBox="0 0 17 17"><path d="M10.5 0.5L16 17L10 12.5L3 13z" fill="#1d8ad2"/><path d="M10.5 0.5L10 12.5L3 13z" fill="#46b3e6"/></svg>
<svg class="a" style="left:1163px;top:320px" width="17" height="17" viewBox="0 0 17 17"><path d="M1.5 13A7 7 0 0 1 15.5 13" fill="none" stroke="#71afe5" stroke-width="3.2"/><path d="M1.5 13A7 7 0 0 1 5 7" fill="none" stroke="#fff" stroke-width="2.5"/><path d="M0 13.5A8.5 8.5 0 0 1 17 13.5" fill="none" stroke="#2b88d8" stroke-width="0.8"/><path d="M8.5 13L12 8.5" stroke="#484644" stroke-width="1.5"/></svg>
<svg class="a" style="left:1188px;top:320px" width="17" height="17" viewBox="0 0 17 17"><rect x="0.8" y="2.5" width="15.4" height="12" fill="#fff" stroke="#484644" stroke-width="1.2"/><text x="8.5" y="11.5" font-size="7.5" text-anchor="middle" fill="#71afe5" font-family="Liberation Sans" font-weight="700">123</text></svg>
<svg class="a" style="left:1063px;top:345px" width="17" height="17" viewBox="0 0 17 17"><rect x="0.8" y="0.8" width="15.4" height="15.4" fill="#fff" stroke="#484644" stroke-width="1.2"/><path d="M4 5h9M4 8.5h6M4 12h9" stroke="#2b88d8" stroke-width="1.3"/><path d="M3 3v11" stroke="#c8c6c4" stroke-width="1"/></svg>
<svg class="a" style="left:1088px;top:345px" width="17" height="17" viewBox="0 0 17 17"><rect x="0.8" y="1.8" width="15.4" height="12.5" fill="#fff" stroke="#484644" stroke-width="1.2"/><path d="M3 9.5L5.5 5.5L8 9.5z" fill="#37a24b"/><path d="M9 5L14 5L11.5 9z" fill="#e04e4e"/><path d="M3 11.5h11" stroke="#c8c6c4" stroke-width="1"/></svg>
<svg class="a" style="left:1113px;top:345px" width="17" height="17" viewBox="0 0 17 17"><rect x="0.8" y="0.8" width="15.4" height="14" fill="#fff" stroke="#484644" stroke-width="1.1"/><path d="M0.8 3.5h15.4" stroke="#484644" stroke-width="1"/><rect x="3" y="6" width="2.5" height="2" fill="#c8c6c4" stroke="#484644" stroke-width="0.6"/><rect x="3" y="10" width="2.5" height="2" fill="#c8c6c4" stroke="#484644" stroke-width="0.6"/><path d="M8 8h9L13.5 12v5h-2v-5z" fill="#fff" stroke="#484644" stroke-width="1"/></svg>
<svg class="a" style="left:1135px;top:342px" width="22" height="22" viewBox="0 0 22 22"><rect x="0.5" y="0.5" width="21" height="21" fill="#e1dfdd" stroke="#a19f9d" stroke-width="1"/></svg>
<svg class="a" style="left:1138px;top:345px" width="17" height="17" viewBox="0 0 17 17"><rect x="0.8" y="0.8" width="15.4" height="15.4" fill="#fff" stroke="#484644" stroke-width="1.2"/><path d="M0.8 4h15.4M0.8 8h15.4M0.8 12h15.4M6 4v12M11 4v12" stroke="#484644" stroke-width="0.9"/><rect x="0.8" y="0.8" width="15.4" height="3" fill="#c8c6c4"/></svg>
<svg class="a" style="left:1163px;top:345px" width="17" height="17" viewBox="0 0 17 17"><rect x="0.8" y="0.8" width="15.4" height="15.4" fill="#fff" stroke="#484644" stroke-width="1.2"/><rect x="1" y="8" width="15" height="8" fill="#2b88d8"/><rect x="11" y="4" width="5" height="12" fill="#2b88d8"/><path d="M0.8 4h15.4M0.8 8h15.4M0.8 12h15.4M6 4v12M11 4v12" stroke="#fff" stroke-width="0.9"/><path d="M0.8 4h10M6 4v4" stroke="#484644" stroke-width="0.9"/></svg>
<div class="t" style="left:1189.50px;top:349.09px;font-size:13px;line-height:13px;color:#2b88d8;font-family:'Liberation Sans',sans-serif;font-weight:700;">R</div>
<div class="t" style="left:1062.00px;top:371.90px;font-size:15px;line-height:15px;color:#2b88d8;font-family:'Liberation Sans',sans-serif;font-weight:700;transform:scaleX(0.9796);transform-origin:0 0;">Py</div>
<svg class="a" style="left:1088px;top:370px" width="17" height="17" viewBox="0 0 17 17"><path d="M0.6 0v16.4H17" fill="none" stroke="#484644" stroke-width="1.2"/><path d="M2 3h10M2 8h7M2 12h5" stroke="#71afe5" stroke-width="1.1"/><circle cx="13.5" cy="3" r="1.8" fill="#fff" stroke="#2b88d8" stroke-width="1.1"/><circle cx="10.5" cy="8" r="1.4" fill="#fff" stroke="#484644" stroke-width="1"/><circle cx="8" cy="12" r="1.2" fill="#fff" stroke="#484644" stroke-width="1"/></svg>
<svg class="a" style="left:1113px;top:370px" width="17" height="17" viewBox="0 0 17 17"><rect x="0.8" y="6.5" width="5" height="4" fill="#71afe5" stroke="#2b88d8" stroke-width="0.9"/><rect x="10.5" y="0.8" width="5.5" height="4.2" fill="#71afe5" stroke="#2b88d8" stroke-width="0.9"/><rect x="10.5" y="6.4" width="5.5" height="4.2" fill="#71afe5" stroke="#2b88d8" stroke-width="0.9"/><rect x="10.5" y="12" width="5.5" height="4.2" fill="#71afe5" stroke="#2b88d8" stroke-width="0.9"/><path d="M5.8 8.5H8.5M8.5 3v11M8.5 3h2M8.5 14h2" fill="none" stroke="#484644" stroke-width="1"/></svg>
<svg class="a" style="left:1138px;top:370px" width="17" height="17" viewBox="0 0 17 17"><path d="M0.8 1.5h15.4v10H6L3 15v-3.5H0.8z" fill="#fff" stroke="#2b88d8" stroke-width="1.3" stroke-linejoin="round"/></svg>
<svg class="a" style="left:1163px;top:370px" width="17" height="17" viewBox="0 0 17 17"><path d="M2.5 0.8h8l4 4v11.4h-12z" fill="#fff" stroke="#484644" stroke-width="1.1"/><path d="M10.5 0.8v4h4" fill="none" stroke="#484644" stroke-width="1"/><circle cx="4.5" cy="7" r="1.3" fill="#2b88d8"/><path d="M6.5 7h6M5 10h7" stroke="#71afe5" stroke-width="1"/></svg>
<svg class="a" style="left:1188px;top:370px" width="17" height="17" viewBox="0 0 17 17"><path d="M4 1h9v5a4.5 4.5 0 0 1-9 0z" fill="#fff" stroke="#484644" stroke-width="1.1"/><path d="M4 1h9v2.5H4z" fill="#71afe5"/><path d="M4 3H1v2a3 3 0 0 0 3 3M13 3h3v2a3 3 0 0 1-3 3" fill="none" stroke="#484644" stroke-width="1.1"/><path d="M8.5 10.5v3M5 16h7" stroke="#2b88d8" stroke-width="2"/></svg>
<svg class="a" style="left:1063px;top:395px" width="17" height="17" viewBox="0 0 17 17"><path d="M1.5 0.8h9.5l4.5 4.5v11H1.5z" fill="#fff" stroke="#484644" stroke-width="1.2"/><path d="M11 0.8v4.5h4.5" fill="none" stroke="#484644" stroke-width="1"/><path d="M4.5 14v-3M7.5 14v-5M10.5 14v-3" stroke="#484644" stroke-width="1.6"/></svg>
<svg class="a" style="left:1088px;top:395px" width="17" height="17" viewBox="0 0 17 17"><rect x="2.5" y="4" width="13.5" height="11" fill="#fff" stroke="#484644" stroke-width="1"/><text x="10" y="12.5" font-size="7" text-anchor="middle" fill="#71afe5" font-family="Liberation Sans">123</text><path d="M4 0.5h4L5.5 4H8L2 10.5L3.5 6H1z" fill="#f7a72a"/></svg>
<svg class="a" style="left:1113px;top:395px" width="17" height="17" viewBox="0 0 17 17"><rect x="2" y="3" width="13" height="12.5" fill="#fff" stroke="#2b88d8" stroke-width="1.5"/><path d="M6 6L10 10L8 13L12 15" fill="none" stroke="#71afe5" stroke-width="2.5"/><path d="M1 0.5h4v5L3 8L1 5.5z" fill="#e0701b"/><circle cx="15" cy="10" r="1.5" fill="#e0701b"/><circle cx="13.5" cy="14.5" r="2" fill="#e0701b"/></svg>
<svg class="a" style="left:1138px;top:395px" width="17" height="17" viewBox="0 0 17 17"><path d="M8.5 0.8L16.2 8.5L8.5 16.2L0.8 8.5z" fill="none" stroke="#8e3fbf" stroke-width="1.3"/><path d="M4.6 4.6L12.4 12.4M8.5 0.8L4.6 12.4" fill="none" stroke="#8e3fbf" stroke-width="1.1"/></svg>
<svg class="a" style="left:1163px;top:395px" width="17" height="17" viewBox="0 0 17 17"><path d="M1 2h9l6 6.5L10 15H1l6-6.5z" fill="#fff" stroke="#2b88d8" stroke-width="1.3" stroke-linejoin="round"/><path d="M6 8.5L11 4M7 11L12 6.5" stroke="#2b88d8" stroke-width="1"/></svg>
<div class="a" style="left:1189.3px;top:402px;width:1.400000000000091px;height:1.3999999999999773px;background:#3b3a39"></div>
<div class="a" style="left:1195.3px;top:402px;width:1.400000000000091px;height:1.3999999999999773px;background:#3b3a39"></div>
<div class="a" style="left:1201.3px;top:402px;width:1.400000000000091px;height:1.3999999999999773px;background:#3b3a39"></div>
<div class="a" style="left:1052px;top:420px;width:162px;height:1px;background:#e1dfdd"></div>
<div class="t" style="left:1063.60px;top:430.14px;font-size:12px;line-height:12px;color:#323130;font-family:'Liberation Sans',sans-serif;transform:scaleX(0.8745);transform-origin:0 0;">Columns</div>
<div class="a" style="left:1056px;top:447px;width:153px;height:54px;background:#fcfcfc;border:1px dashed #c8c6c4"></div>
<div class="a" style="left:1059px;top:451px;width:147px;height:20px;background:#edebe9;border:1px solid #c8c6c4;border-radius:2px"></div>
<div class="t" style="left:1063.60px;top:455.44px;font-size:12px;line-height:12px;color:#252423;font-family:'Liberation Sans',sans-serif;transform:scaleX(0.8836);transform-origin:0 0;">Dimension</div>
<svg class="a" style="left:1179px;top:457px" width="11" height="7" viewBox="0 0 11 7"><path d="M0.6 0.6L5.5 5.5L10.4 0.6" fill="none" stroke="#605e5c" stroke-width="1"/></svg>
<svg class="a" style="left:1194px;top:456px" width="9" height="9" viewBox="0 0 9 9"><path d="M0.6 0.6L8.4 8.4M8.4 0.6L0.6 8.4" stroke="#605e5c" stroke-width="1.1"/></svg>
<div class="a" style="left:1059px;top:473px;width:147px;height:20px;background:#edebe9;border:1px solid #c8c6c4;border-radius:2px"></div>
<div class="t" style="left:1063.60px;top:477.44px;font-size:12px;line-height:12px;color:#252423;font-family:'Liberation Sans',sans-serif;transform:scaleX(0.8723);transform-origin:0 0;">Sum of revenue</div>
<svg class="a" style="left:1179px;top:479px" width="11" height="7" viewBox="0 0 11 7"><path d="M0.6 0.6L5.5 5.5L10.4 0.6" fill="none" stroke="#605e5c" stroke-width="1"/></svg>
<svg class="a" style="left:1194px;top:478px" width="9" height="9" viewBox="0 0 9 9"><path d="M0.6 0.6L8.4 8.4M8.4 0.6L0.6 8.4" stroke="#605e5c" stroke-width="1.1"/></svg>
<div class="t" style="left:1063.90px;top:512.96px;font-size:11.5px;line-height:11.5px;color:#323130;font-family:'Liberation Sans',sans-serif;-webkit-text-stroke:0.3px #323130">Drill through</div>
<div class="t" style="left:1063.90px;top:534.86px;font-size:11.5px;line-height:11.5px;color:#323130;font-family:'Liberation Sans',sans-serif;transform:scaleX(0.9220);transform-origin:0 0;">Cross-report</div>
<div class="a" style="left:1166px;top:533px;width:29px;height:15px;background:#fff;border:1px solid #605e5c;border-radius:8px"></div>
<div class="a" style="left:1169.5px;top:536.5px;width:8px;height:8px;border-radius:50%;background:#605e5c"></div>
<div class="t" style="left:1179.00px;top:537.33px;font-size:8px;line-height:8px;color:#605e5c;font-family:'Liberation Sans',sans-serif;transform:scaleX(1.1364);transform-origin:0 0;">Off</div>
<div class="t" style="left:1063.90px;top:558.56px;font-size:11.5px;line-height:11.5px;color:#323130;font-family:'Liberation Sans',sans-serif;transform:scaleX(0.9111);transform-origin:0 0;">Keep all filters</div>
<div class="a" style="left:1166px;top:558px;width:29px;height:14px;background:#117865;border-radius:7px"></div>
<div class="a" style="left:1183px;top:561px;width:8px;height:8px;border-radius:50%;background:#fff"></div>
<div class="t" style="left:1170.00px;top:561.33px;font-size:8px;line-height:8px;color:#ffffff;font-family:'Liberation Sans',sans-serif;transform:scaleX(0.9363);transform-origin:0 0;">On</div>
<div class="a" style="left:1056px;top:580px;width:153px;height:24px;background:#fcfcfc;border:1px dashed #d2d0ce"></div>
<div class="t" style="left:1064.80px;top:587.06px;font-size:11.5px;line-height:11.5px;color:#323130;font-family:'Liberation Sans',sans-serif;transform:scaleX(0.9535);transform-origin:0 0;">Add drill-through fields here</div>
<div class="t" style="left:1222.70px;top:153.80px;font-size:15px;line-height:15px;color:#252423;font-family:'Liberation Sans',sans-serif;transform:scaleX(0.9110);transform-origin:0 0;-webkit-text-stroke:0.45px #252423">Data</div>
<div class="a" style="left:1218px;top:184px;width:155px;height:24px;border:1px solid #8a8886;border-radius:2px"></div>
<svg class="a" style="left:1224px;top:189px" width="15" height="15" viewBox="0 0 15 15"><circle cx="9.5" cy="5.5" r="4.3" fill="none" stroke="#605e5c" stroke-width="1.1"/><path d="M6.5 8.5L1 14" stroke="#605e5c" stroke-width="1.1"/></svg>
<div class="t" style="left:1244.50px;top:190.97px;font-size:13.5px;line-height:13.5px;color:#605e5c;font-family:'Liberation Sans',sans-serif;transform:scaleX(0.8529);transform-origin:0 0;">Search</div>
<svg class="a" style="left:1222px;top:223px" width="10" height="6" viewBox="0 0 10 6"><path d="M0.6 0.6L5 5L9.4 0.6" fill="none" stroke="#605e5c" stroke-width="1"/></svg>
<svg class="a" style="left:1235px;top:221px" width="12" height="12" viewBox="0 0 12 12"><rect x="0.6" y="0.6" width="10.2" height="10.2" rx="1.5" fill="none" stroke="#3b3a39" stroke-width="1.1"/><path d="M0.6 4h10.2M0.6 7.4h10.2M4 0.6v10.2M7.4 0.6v10.2" stroke="#3b3a39" stroke-width="1"/></svg>
<div class="a" style="left:1240.5px;top:226.5px;width:11px;height:11px;border-radius:50%;background:#117865;border:1px solid #f3f2f1"></div>
<svg class="a" style="left:1243px;top:229px" width="6" height="5" viewBox="0 0 6 5"><path d="M0.5 2.5L2.2 4L5.5 0.7" fill="none" stroke="#fff" stroke-width="1"/></svg>
<div class="t" style="left:1251.80px;top:221.34px;font-size:12px;line-height:12px;color:#323130;font-family:'Liberation Sans',sans-serif;transform:scaleX(0.8854);transform-origin:0 0;">Dimension</div>
<div class="a" style="left:1249px;top:243px;width:11px;height:11px;background:#117865;border-radius:2px"></div>
<svg class="a" style="left:1250px;top:245px" width="9" height="7" viewBox="0 0 9 7"><path d="M1 3.5L3.5 6L8 1" fill="none" stroke="#fff" stroke-width="1.2"/></svg>
<div class="t" style="left:1282.80px;top:242.84px;font-size:12px;line-height:12px;color:#605e5c;font-family:'Liberation Sans',sans-serif;transform:scaleX(0.8766);transform-origin:0 0;">Customer</div>
<div class="a" style="left:1219px;top:259px;width:153px;height:21px;background:#d2d0ce"></div>
<div class="a" style="left:1249px;top:264px;width:11px;height:11px;background:#117865;border-radius:2px"></div>
<svg class="a" style="left:1250px;top:266px" width="9" height="7" viewBox="0 0 9 7"><path d="M1 3.5L3.5 6L8 1" fill="none" stroke="#fff" stroke-width="1.2"/></svg>
<svg class="a" style="left:1267px;top:263px" width="11" height="13" viewBox="0 0 11 13"><rect x="0.6" y="0.6" width="9.8" height="11.8" rx="1.5" fill="none" stroke="#3b3a39" stroke-width="1.1"/><rect x="2.5" y="2.5" width="6" height="2.5" fill="none" stroke="#3b3a39" stroke-width="0.8"/><rect x="2.3" y="6.5" width="1.4" height="1.4" fill="#3b3a39"/><rect x="2.3" y="8.8" width="1.4" height="1.4" fill="#3b3a39"/><rect x="2.3" y="11.1" width="1.4" height="1.4" fill="#3b3a39"/><rect x="4.6" y="6.5" width="1.4" height="1.4" fill="#3b3a39"/><rect x="4.6" y="8.8" width="1.4" height="1.4" fill="#3b3a39"/><rect x="4.6" y="11.1" width="1.4" height="1.4" fill="#3b3a39"/><rect x="6.9" y="6.5" width="1.4" height="1.4" fill="#3b3a39"/><rect x="6.9" y="8.8" width="1.4" height="1.4" fill="#3b3a39"/><rect x="6.9" y="11.1" width="1.4" height="1.4" fill="#3b3a39"/></svg>
<div class="t" style="left:1282.80px;top:264.34px;font-size:12px;line-height:12px;color:#323130;font-family:'Liberation Sans',sans-serif;transform:scaleX(0.8770);transform-origin:0 0;">Sum of revenue</div>
<svg class="a" style="left:1223px;top:286px" width="6" height="10" viewBox="0 0 6 10"><path d="M0.6 0.6L5 5L0.6 9.4" fill="none" stroke="#605e5c" stroke-width="1"/></svg>
<svg class="a" style="left:1235px;top:285px" width="12" height="12" viewBox="0 0 12 12"><rect x="0.6" y="0.6" width="10.2" height="10.2" rx="1.5" fill="none" stroke="#3b3a39" stroke-width="1.1"/><path d="M0.6 4h10.2M0.6 7.4h10.2M4 0.6v10.2M7.4 0.6v10.2" stroke="#3b3a39" stroke-width="1"/></svg>
<div class="t" style="left:1251.80px;top:285.44px;font-size:12px;line-height:12px;color:#605e5c;font-family:'Liberation Sans',sans-serif;transform:scaleX(0.7436);transform-origin:0 0;">FACT</div>
<svg class="a" style="left:46px;top:684px" width="18" height="14" viewBox="0 0 18 14"><rect x="0.7" y="0.7" width="16.6" height="9.6" fill="none" stroke="#323130" stroke-width="1.3"/><path d="M9 10.5v2M5.5 12.8h7" stroke="#323130" stroke-width="1.3"/></svg>
<div class="a" style="left:45px;top:703px;width:22px;height:3px;background:#117865;border-radius:2px"></div>
<svg class="a" style="left:89px;top:682px" width="12" height="18" viewBox="0 0 12 18"><rect x="0.6" y="0.6" width="10.8" height="16.8" rx="1" fill="none" stroke="#605e5c" stroke-width="1.1"/><path d="M5.3 14.5h1.4" stroke="#605e5c" stroke-width="1"/></svg>
<svg class="a" style="left:119px;top:690px" width="5" height="7" viewBox="0 0 5 7"><path d="M4.5 0L0 3.5L4.5 7z" fill="#c8c6c4"/></svg>
<svg class="a" style="left:140px;top:690px" width="5" height="7" viewBox="0 0 5 7"><path d="M0.5 0L5 3.5L0.5 7z" fill="#c8c6c4"/></svg>
<div class="a" style="left:150px;top:678px;width:68px;height:32px;background:#fff"></div>
<div class="a" style="left:150px;top:706px;width:68px;height:4px;background:#117865"></div>
<div class="t" style="left:168.90px;top:688.14px;font-size:12px;line-height:12px;color:#252423;font-family:'Liberation Sans',sans-serif;transform:scaleX(0.8070);transform-origin:0 0;">Page 1</div>
<div class="a" style="left:218px;top:680px;width:35px;height:28px;background:#117865"></div>
<svg class="a" style="left:228px;top:687px" width="14" height="14" viewBox="0 0 14 14"><path d="M7 1.5v11M1.5 7h11" stroke="#fff" stroke-width="2.6"/></svg>
<div class="t" style="left:4.90px;top:715.76px;font-size:11.5px;line-height:11.5px;color:#605e5c;font-family:'Liberation Sans',sans-serif;transform:scaleX(0.8789);transform-origin:0 0;">Page 1 of 1</div>
<div class="a" style="left:1185px;top:720px;width:4px;height:2px;background:#605e5c"></div>
<div class="a" style="left:1193px;top:720px;width:90px;height:1px;background:#8a8886"></div>
<div class="a" style="left:1223px;top:716px;width:4px;height:10px;background:#605e5c"></div>
<div class="a" style="left:1238px;top:717px;width:1px;height:7px;background:#8a8886"></div>
<svg class="a" style="left:1288px;top:716px" width="8" height="8" viewBox="0 0 8 8"><path d="M4 0v8M0 4h8" stroke="#605e5c" stroke-width="1.3"/></svg>
<div class="t" style="left:1310.70px;top:715.44px;font-size:12px;line-height:12px;color:#605e5c;font-family:'Liberation Sans',sans-serif;transform:scaleX(0.8125);transform-origin:0 0;">73%</div>
<svg class="a" style="left:1344px;top:715px" width="15" height="12" viewBox="0 0 15 12"><rect x="0.8" y="0.8" width="13.4" height="10.4" fill="none" stroke="#605e5c" stroke-width="1.5"/><path d="M3 4V3h1.5M10.5 3H12v1M12 8v1h-1.5M4.5 9H3V8" fill="none" stroke="#605e5c" stroke-width="0.8"/></svg>
</body></html>
